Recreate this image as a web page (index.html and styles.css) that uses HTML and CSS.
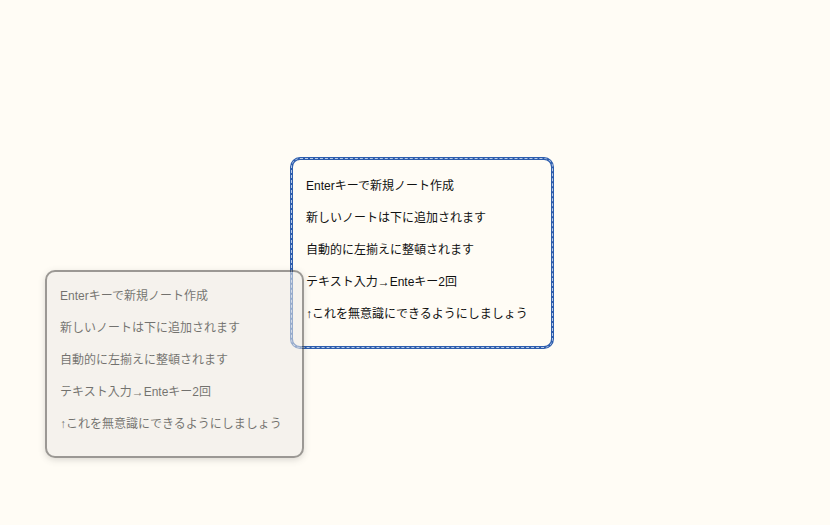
FILE: index.html
```html
<!DOCTYPE html>
<html lang="ja">
<head>
<meta charset="utf-8">
<link rel="stylesheet" href="styles.css">
</head>
<body>
<div class="canvas">
  <div class="note note-active">
    <p>Enterキーで新規ノート作成</p>
    <p>新しいノートは下に追加されます</p>
    <p>自動的に左揃えに整頓されます</p>
    <p>テキスト入力→Enteキー2回</p>
    <p>↑これを無意識にできるようにしましょう</p>
  </div>
  <div class="note note-ghost">
    <p>Enterキーで新規ノート作成</p>
    <p>新しいノートは下に追加されます</p>
    <p>自動的に左揃えに整頓されます</p>
    <p>テキスト入力→Enteキー2回</p>
    <p>↑これを無意識にできるようにしましょう</p>
  </div>
</div>
</body>
</html>
```

FILE: styles.css
```css
html, body {
  margin: 0;
  padding: 0;
  background: #fffcf5;
}
body {
  width: 830px;
  height: 525px;
  overflow: hidden;
  font-family: "Liberation Sans", "Noto Sans CJK JP", sans-serif;
  font-size: 12px;
  color: #111;
}
.canvas {
  position: relative;
  width: 830px;
  height: 525px;
}
.note {
  position: absolute;
  box-sizing: border-box;
  border-radius: 10px;
}
.note p {
  margin: 0 0 14px;
  line-height: 18px;
  height: 18px;
  white-space: nowrap;
}
.note-active {
  left: 290px;
  top: 157px;
  width: 264px;
  height: 192px;
  background: #fffcf5;
  border: 3px solid #2d5dad;
  padding: 17px 13px 9px;
}
.note-active::after {
  content: "";
  position: absolute;
  inset: -2px;
  border: 1px dashed #b9cbe8;
  border-radius: 9px;
  pointer-events: none;
}
.note-ghost {
  left: 45px;
  top: 270px;
  width: 259px;
  height: 188px;
  background: #edebe7;
  border: 2px solid #4a4846;
  padding: 15px 13px 9px;
  opacity: 0.55;
  box-shadow: 0 2px 6px rgba(0, 0, 0, 0.25);
  color: #000;
}
```
